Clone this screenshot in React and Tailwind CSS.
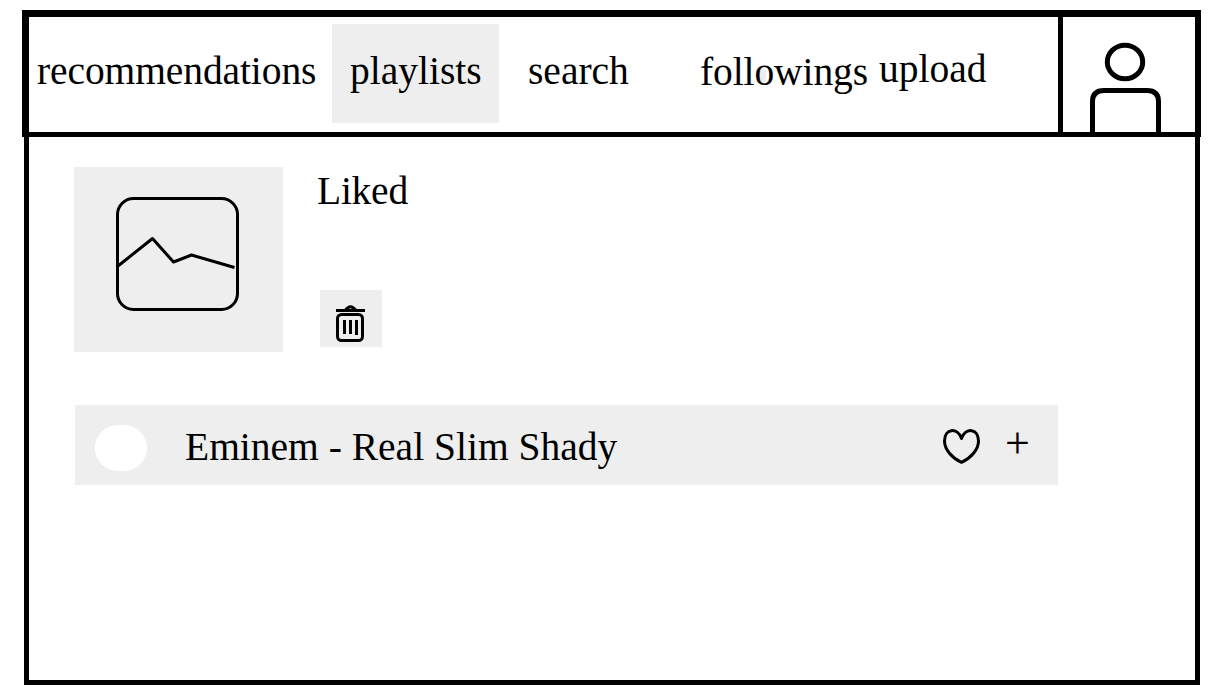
function UserIcon() {
  return (
    <svg className="block h-[115px] w-[132px]" viewBox="1063 17 132 115" fill="none" stroke="#000" strokeWidth="5">
      <ellipse cx="1125" cy="62" rx="17.700" ry="16.700" />
      <path d="M1092.5 133V101.5Q1092.5 90.5 1104 90.5H1147Q1158.500 90.500 1158.500 101.500V133" />
    </svg>
  );
}

function ImageIcon() {
  return (
    <svg className="block h-[185px] w-[209px]" viewBox="74 167 209 185" fill="none" stroke="#000" strokeWidth="3">
      <rect x="117.500" y="198.500" width="120" height="111" rx="16" />
      <path d="M118 266L152.500 238.500L173.500 262L191.500 255L234.500 267.500" strokeLinejoin="round" />
    </svg>
  );
}

function TrashIcon() {
  return (
    <svg className="block h-[57px] w-[62px]" viewBox="320 290 62 57" fill="none" stroke="#000" strokeWidth="3">
      <path d="M336 310.500H365" />
      <path d="M345.500 310Q350.500 303.500 355.500 310" />
      <rect x="337.500" y="314.500" width="25" height="26" rx="4" />
      <path d="M344.500 320V334M350.500 320V334M356.500 320V335" />
    </svg>
  );
}

function HeartIcon() {
  return (
    <svg className="block h-[36px] w-[38px]" viewBox="943 428 38 36" fill="none" stroke="#000" strokeWidth="3" strokeLinejoin="round">
      <path d="M961.500 438.500C957.500 427.200 944.500 428 944.500 441C944.500 449.500 952 458 961.500 462.300C971 458 978.500 449.500 978.500 441C978.500 428 965.500 427.200 961.500 438.500Z" />
    </svg>
  );
}

export default function App() {
  return (
    <div className="flex h-[691px] w-[1216px] flex-col overflow-hidden bg-white pl-[22px] pt-[10px] font-['Liberation_Serif',serif] text-[39.5px] leading-[40px] whitespace-nowrap text-black">
      <header className="flex h-[127px] w-[1179px] shrink-0 border-t-[7px] border-r-[6px] border-b-[5px] border-l-[7px] border-black">
        <nav className="flex w-[1029px] items-start pl-[8px]">
          <a className="w-[295px] pt-[34px] tracking-[-0.1px]">recommendations</a>
          <a className="mt-[7px] h-[99px] w-[167px] bg-[#eeeeee] pt-[27px] pl-[18px]">playlists</a>
          <a className="w-[201px] pt-[34px] pl-[29px]">search</a>
          <a className="relative isolate w-[179px] pt-[35px] tracking-[-0.1px]">
            <span className="absolute top-[51px] left-[58px] -z-10 h-[15px] w-[8px] rounded-full bg-[#eeeeee]" />
            followings
          </a>
          <a className="pt-[32px]">upload</a>
        </nav>
        <div className="border-l-[5px] border-black">
          <UserIcon />
        </div>
      </header>
      <main className="ml-[2px] flex h-[548px] w-[1176px] flex-col border-x-[5px] border-b-[5px] border-black pt-[30px] pl-[45px]">
        <section className="flex h-[185px]">
          <div className="w-[209px] bg-[#eeeeee]">
            <ImageIcon />
          </div>
          <div className="ml-[34px] flex flex-col pt-[4px]">
            <h1 className="tracking-[-0.25px]">Liked</h1>
            <button className="mt-[79px] ml-[3px] h-[57px] w-[62px] bg-[#eeeeee]">
              <TrashIcon />
            </button>
          </div>
        </section>
        <div className="mt-[53px] ml-px flex h-[80px] w-[983px] items-start bg-[#eeeeee] pl-[20px]">
          <div className="mt-[20px] h-[46px] w-[52px] rounded-[23px] bg-white" />
          <p className="w-[758px] pt-[22px] pl-[38px]">Eminem - Real Slim Shady</p>
          <button className="mt-[23px] ml-[38px]">
            <HeartIcon />
          </button>
          <button className="mt-[19px] ml-[24px] text-[44px] leading-[40px]">+</button>
        </div>
      </main>
    </div>
  );
}
